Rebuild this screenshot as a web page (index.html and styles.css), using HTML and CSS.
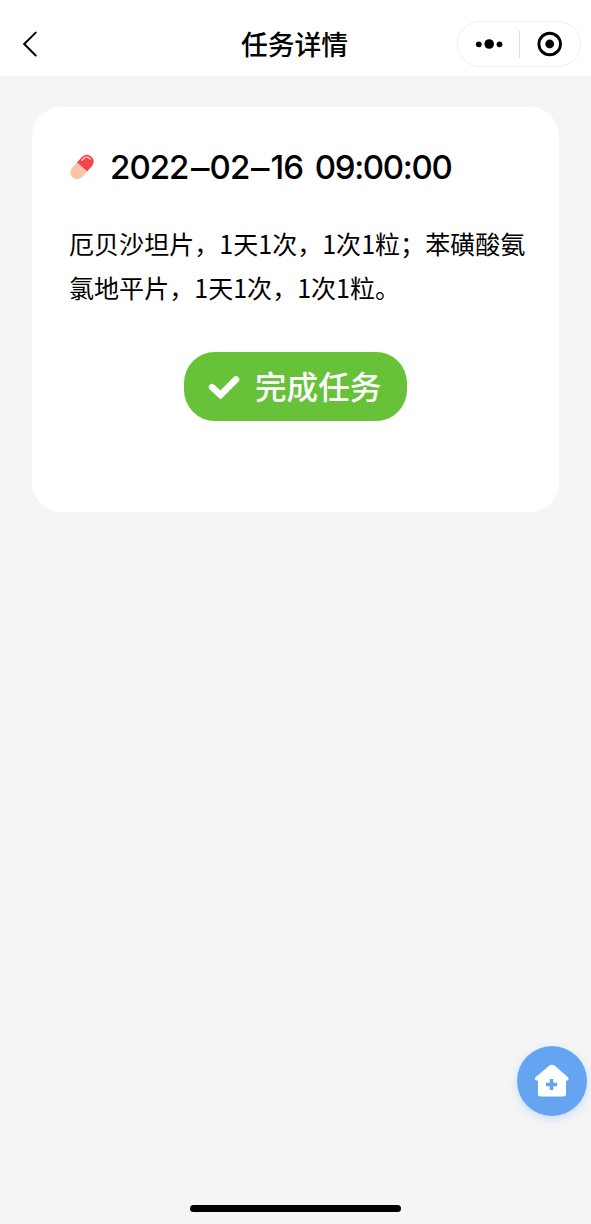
FILE: index.html
```html
<!DOCTYPE html>
<html lang="zh-CN">
<head>
<meta charset="utf-8">
<title>任务详情</title>
<link rel="stylesheet" href="styles.css">
</head>
<body>
<header class="navbar">
  <svg class="back" viewBox="0 0 16 26"><path d="M14.7 1.6 3.2 13l11.5 11.5"/></svg>
  <h1 class="title">任务详情</h1>
  <div class="capsule">
    <svg class="dots" viewBox="0 0 28 12"><circle cx="3.8" cy="6.3" r="2.9"/><circle cx="14.2" cy="6" r="4.8"/><circle cx="24.5" cy="6.3" r="2.9"/></svg>
    <span class="divider"></span>
    <svg class="target" viewBox="0 0 26 26"><circle class="ring" cx="12.7" cy="13" r="10.8"/><circle cx="12.7" cy="13" r="4.4"/></svg>
  </div>
</header>
<main class="content">
  <section class="card">
    <div class="heading">
      <svg class="pill" viewBox="0 0 28 28">
        <g transform="rotate(42 14 14)">
          <path d="M7.2 14V6.8a6.8 6.8 0 0 1 13.6 0V14z" fill="#f34747"/>
          <path d="M7.2 14v7.2a6.8 6.8 0 0 0 13.6 0V14z" fill="#fac4a8"/>
          <path d="M9.5 9V7A4.5 4.5 0 0 1 14 2.5h1" fill="none" stroke="#ffc5c5" stroke-width="1.4" stroke-linecap="round"/>
        </g>
      </svg>
      <time class="date">2022<span class="dash">–</span>02<span class="dash">–</span>16 <span class="clock">09:00:00</span></time>
    </div>
    <p class="detail">厄贝沙坦片，1天1次，1次1粒；苯磺酸氨<br>氯地平片，1天1次，1次1粒。</p>
    <button class="done">
      <svg class="check" viewBox="0 0 32 24"><path d="M4 12.2 12.6 20 28 4.4"/></svg>
      <span class="done-label">完成任务</span>
    </button>
  </section>
</main>
<button class="home" aria-label="首页">
  <svg class="house" viewBox="0 0 36 34">
    <path d="M15.8 1.3Q18 0 20.2 1.3L34 13.2q1.6 2.8-1.2 3.4H32V30q0 2.5-2.5 2.5h-23Q4 32.5 4 30V16.6H2.5Q0 16 1.5 13.2Z" fill="#fff"/>
    <path d="M17.5 15v11M12 20.5h11" stroke="#65a4f1" stroke-width="3.6"/>
  </svg>
</button>
<div class="indicator"></div>
</body>
</html>
```
FILE: styles.css
```css
* { box-sizing: border-box; }

body {
  margin: 0;
  height: 1224px;
  background: #f5f5f6;
  color: #000;
  font-family: "Noto Sans CJK SC", sans-serif;
  overflow: hidden;
}

button { border: 0; padding: 0; font-family: inherit; }

.navbar {
  display: grid;
  grid-template-columns: 1fr auto 1fr;
  align-items: center;
  height: 76px;
  padding: 12px 10px 0 21px;
  background: #fff;
}

.back {
  width: 16px;
  height: 26px;
  fill: none;
  stroke: #000;
  stroke-width: 2;
  stroke-linecap: round;
}

.title {
  margin: 0 0 0 -13px;
  font-size: 26.8px;
  line-height: 40px;
  font-weight: 500;
}

.capsule {
  display: flex;
  align-items: center;
  justify-self: end;
  width: 124px;
  height: 46px;
  padding-left: 17px;
  border: 1px solid #efefef;
  border-radius: 23px;
}

.dots { width: 28px; height: 12px; }
.divider { width: 1px; height: 27px; margin: 0 17px 0 16px; background: #dcdcdc; }
.target { width: 26px; height: 26px; }
.ring { fill: none; stroke: #000; stroke-width: 2.9; }

.content { padding: 31px 32px 0 32px; }

.card {
  display: flex;
  flex-direction: column;
  height: 405px;
  padding: 40px 33px 0 37px;
  border-radius: 29px;
  background: #fff;
}

.heading { display: flex; align-items: center; height: 40px; }
.pill { width: 28px; height: 28px; margin: -1px 14px 0 -1px; }
.date {
  font: 500 33px/40px Inter, sans-serif;
  letter-spacing: -0.95px;
  word-spacing: 4px;
  white-space: nowrap;
}
.dash {
  display: inline-block;
  margin: 0 2.5px 0 3px;
  transform: translateY(1px) scaleX(1.12);
}
.clock { letter-spacing: -1.35px; }

.detail {
  margin: 34px 0 0;
  font-size: 25.05px;
  line-height: 44px;
  white-space: nowrap;
}

.done {
  display: flex;
  align-items: center;
  align-self: center;
  width: 223px;
  height: 69px;
  margin: 43px 0 0 -4px;
  padding-left: 24px;
  border-radius: 31px;
  background: #67c23a;
  color: #fff;
  font-size: 31.6px;
  line-height: 44px;
  font-weight: 500;
}

.done-label { padding-bottom: 4px; }

.check {
  width: 32px;
  height: 24px;
  margin-right: 15px;
  fill: none;
  stroke: #fff;
  stroke-width: 6.5;
  stroke-linecap: round;
}

.home {
  position: fixed;
  left: 517px;
  top: 1046px;
  display: grid;
  place-items: center;
  width: 70px;
  height: 70px;
  border-radius: 50%;
  background: #65a4f1;
  box-shadow: 0 3px 8px rgba(101, 164, 241, 0.3);
}

.house { width: 36px; height: 34px; }

.indicator {
  position: fixed;
  left: 190px;
  top: 1205px;
  width: 211px;
  height: 7px;
  border-radius: 4px;
  background: #000;
}
```
